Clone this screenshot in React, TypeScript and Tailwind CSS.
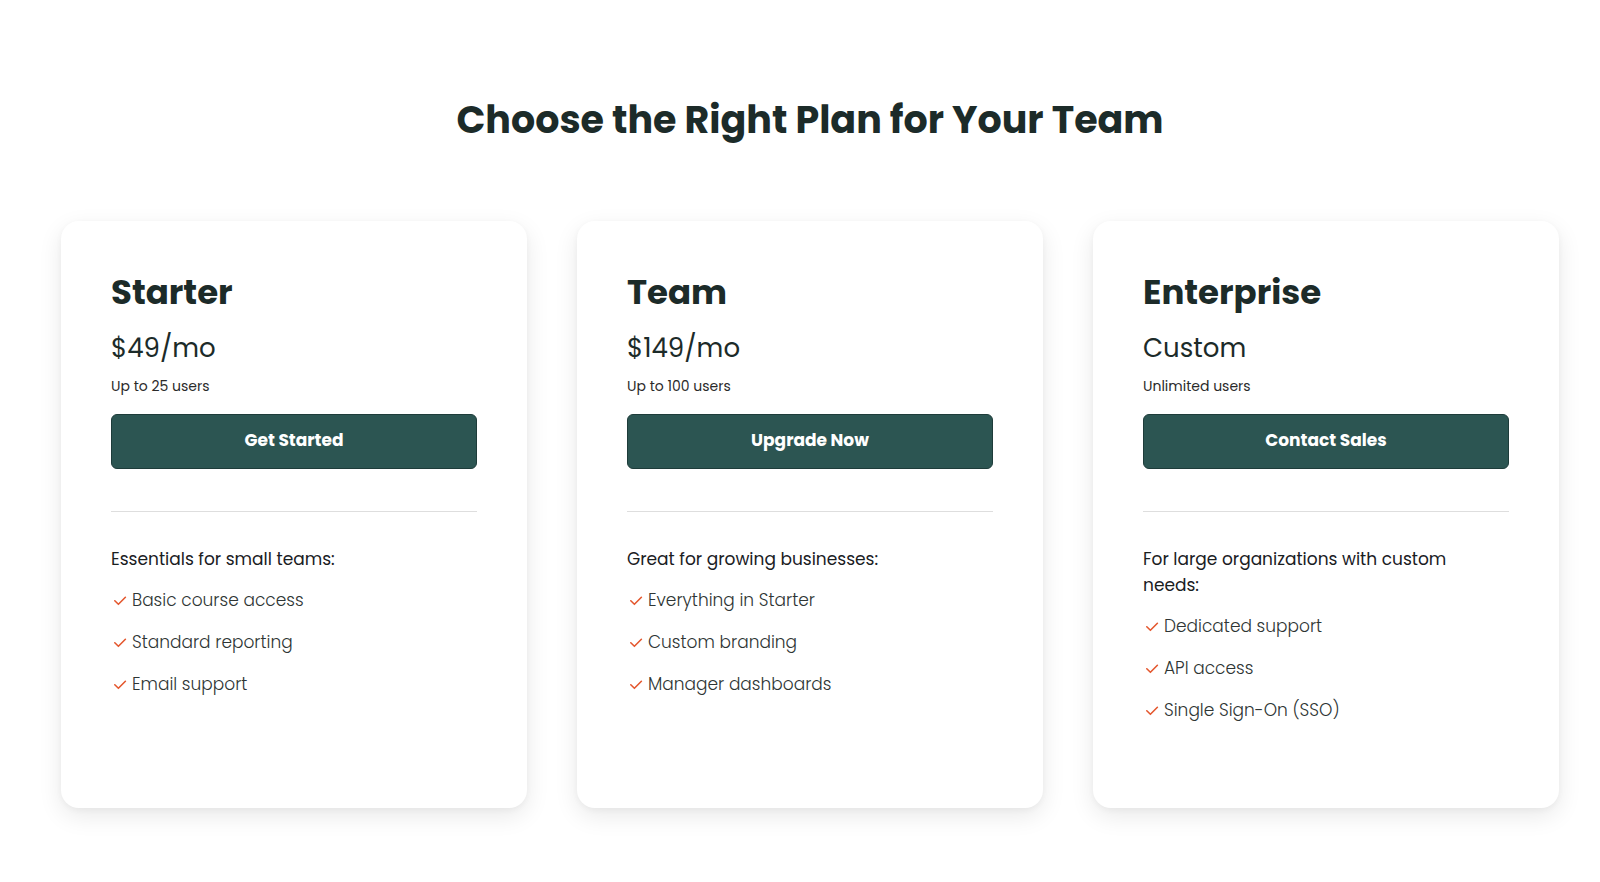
import React from 'react';

interface Plan {
  name: string;
  price: string;
  users: string;
  cta: string;
  intro: string;
  features: string[];
}

const plans: Plan[] = [
  {
    name: 'Starter',
    price: '$49/mo',
    users: 'Up to 25 users',
    cta: 'Get Started',
    intro: 'Essentials for small teams:',
    features: ['Basic course access', 'Standard reporting', 'Email support'],
  },
  {
    name: 'Team',
    price: '$149/mo',
    users: 'Up to 100 users',
    cta: 'Upgrade Now',
    intro: 'Great for growing businesses:',
    features: ['Everything in Starter', 'Custom branding', 'Manager dashboards'],
  },
  {
    name: 'Enterprise',
    price: 'Custom',
    users: 'Unlimited users',
    cta: 'Contact Sales',
    intro: 'For large organizations with custom needs:',
    features: ['Dedicated support', 'API access', 'Single Sign-On (SSO)'],
  },
];

const Check = () => (
  <svg width="14" height="14" viewBox="0 0 14 14" fill="none" stroke="#e4572e" strokeWidth="1.6" strokeLinecap="round" strokeLinejoin="round" className="shrink-0">
    <path d="M1.8 6.8L5.4 10.3L12.4 3.3" />
  </svg>
);

const PlanCard: React.FC<{ plan: Plan }> = ({ plan }) => (
  <div className="bg-white rounded-[18px] shadow-[0_8px_24px_rgba(0,0,0,0.09),0_2px_6px_rgba(0,0,0,0.04)] min-h-[587px] px-[50px] pt-[50px] pb-10 flex flex-col">
    <h2 className="text-[34px] font-bold leading-tight text-[#1c2b29]">{plan.name}</h2>
    <p className="text-[26px] leading-tight text-[#1c2b29] mt-[19px]">{plan.price}</p>
    <p className="text-[14px] text-[#2a2a2a] mt-[11px]">{plan.users}</p>
    <button className="mt-[17px] h-[55px] w-full rounded-[6px] bg-[#2c5552] border border-[#1e3c3a] text-white text-[17px] font-bold">
      {plan.cta}
    </button>
    <div className="h-px bg-[#dedede] mt-[42px]" />
    <p className="text-[17px] font-normal text-[#1a201f] leading-[26px] mt-[34px] pr-8">{plan.intro}</p>
    <ul className="mt-[8px] flex flex-col">
      {plan.features.map((f) => (
        <li key={f} className="flex items-center gap-[5px] h-[42px] pl-[2px] text-[17px] font-light text-[#2e3534]">
          <Check />
          {f}
        </li>
      ))}
    </ul>
  </div>
);

export default function App() {
  return (
    <div className="min-h-screen bg-white" style={{ fontFamily: 'Poppins, Inter, "Noto Sans", sans-serif' }}>
      <div className="pl-[61px] pr-[41px] pt-[96px] pb-16">
        <h1 className="text-center text-[38px] font-bold text-[#1c2b29] leading-tight">
          Choose the Right Plan for Your Team
        </h1>
        <div className="grid grid-cols-3 gap-[50px] mt-[77px]">
          {plans.map((p) => (
            <PlanCard key={p.name} plan={p} />
          ))}
        </div>
      </div>
    </div>
  );
}
